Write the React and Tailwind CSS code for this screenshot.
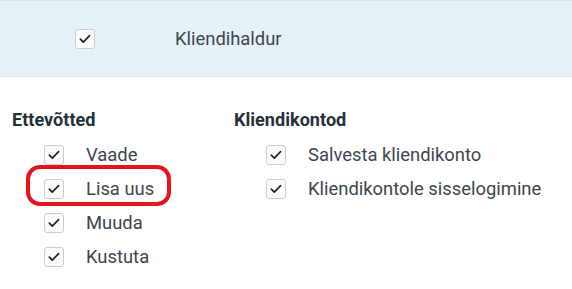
import React from 'react';

function Check() {
  return (
    <span className="w-5 h-5 shrink-0 rounded-[3px] border border-[#c9cdd1] bg-[#fbfbfb] flex items-center justify-center">
      <svg width="20" height="20" viewBox="0 0 20 20" fill="none">
        <path d="M4.8 10.2l3.3 3.3 7-7.2" stroke="#1a1e22" strokeWidth="1.8" strokeLinecap="round" strokeLinejoin="round" />
      </svg>
    </span>
  );
}

function Item({ label }) {
  return (
    <div className="h-[34px] flex items-center gap-[22px]">
      <Check />
      <span className="text-[18.4px] text-[#3d4650]">{label}</span>
    </div>
  );
}

export default function App() {
  const groups = [
    { title: 'Ettevõtted', width: 'w-[222px]', items: ['Vaade', 'Lisa uus', 'Muuda', 'Kustuta'] },
    { title: 'Kliendikontod', width: 'flex-1', items: ['Salvesta kliendikonto', 'Kliendikontole sisselogimine'] },
  ];

  return (
    <div className="relative w-[572px] h-[289px] bg-white overflow-hidden font-['Roboto',sans-serif]">
      {/* Header band */}
      <div className="h-[77px] border-t border-b border-[#dfe3e6] bg-[#e5f1f7] flex items-center pl-[75px] gap-[80px]">
        <Check />
        <span className="text-[18.4px] text-[#3d4650]">Kliendihaldur</span>
      </div>

      {/* Permission groups */}
      <div className="flex pl-[12px] pt-[31px]">
        {groups.map(g => (
          <div key={g.title} className={g.width}>
            <h3 className="h-[24px] leading-[24px] text-[18.1px] font-bold text-[#26303a] mb-[6px]">{g.title}</h3>
            <div className="pl-[32px]">
              {g.items.map(i => <Item key={i} label={i} />)}
            </div>
          </div>
        ))}
      </div>

      {/* Red highlight */}
      <div className="absolute left-[26px] top-[165px] w-[145px] h-[41px] border-[4px] border-[#e5141d] rounded-[14px]" />
    </div>
  );
}
